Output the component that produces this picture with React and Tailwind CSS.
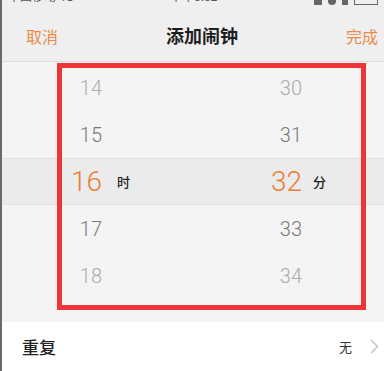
import React from 'react';

const cjk = { fontFamily: '"Noto Sans CJK SC", "Noto Sans", sans-serif' };

const rows = [
	{ h: '14', m: '30', tone: 'text-[#ababab]' },
	{ h: '15', m: '31', tone: 'text-[#7a7a7a]' },
	{ h: '16', m: '32', tone: 'text-[#ea7d3a]', active: true },
	{ h: '17', m: '33', tone: 'text-[#7a7a7a]' },
	{ h: '18', m: '34', tone: 'text-[#ababab]' },
];

const PickerRow = ({ row }) => (
	<div
		className={
			'flex items-center h-[47px] ' +
			(row.active ? 'bg-[#ebebeb] border-y border-[#e2e2e2]' : '')
		}
	>
		<div
			className={
				'w-[100px] text-right font-light leading-none ' +
				row.tone +
				(row.active ? ' text-[28px]' : ' text-[20px]')
			}
			style={{ fontFamily: 'Roboto, "Open Sans", sans-serif' }}
		>
			{row.h}
		</div>
		<div className="w-[100px] pl-[15px] text-[13px] font-medium text-[#222]" style={cjk}>
			{row.active ? '时' : ''}
		</div>
		<div
			className={
				'w-[100px] text-right font-light leading-none ' +
				row.tone +
				(row.active ? ' text-[28px]' : ' text-[20px]')
			}
			style={{ fontFamily: 'Roboto, "Open Sans", sans-serif' }}
		>
			{row.m}
		</div>
		<div className="pl-[11px] text-[13px] font-medium text-[#222]" style={cjk}>
			{row.active ? '分' : ''}
		</div>
	</div>
);

const App = () => {
	return (
		<div className="w-[384px] h-[371px] overflow-hidden bg-[#efefef] border-l-2 border-[#6a6a6a]">
			{/* status bar, mostly cut off */}
			<div className="h-[5px] overflow-hidden flex justify-between px-[6px] text-[12px] leading-[14px] text-[#555]">
				<span className="-mt-[11px]" style={cjk}>中国移动 4G</span>
				<span className="-mt-[11px]" style={cjk}>下午3:32</span>
				<span className="-mt-[11px] flex gap-[6px] items-end">
					<span className="w-[8px] h-[10px] bg-[#666]" />
					<span className="w-[8px] h-[10px] rounded-full bg-[#666]" />
					<span className="w-[6px] h-[10px] bg-[#666]" />
					<span className="w-[24px] h-[10px] border border-[#666]" />
				</span>
			</div>

			{/* header */}
			<div className="h-[57px] pt-[5px] flex items-center justify-between pl-[24px] pr-[6px] border-b border-[#dcdcdc]" style={cjk}>
				<span className="text-[16px] text-[#ec8a4c]">取消</span>
				<span className="text-[18px] font-bold text-[#1e1e1e]">添加闹钟</span>
				<span className="text-[16px] text-[#ec8a4c]">完成</span>
			</div>

			{/* picker */}
			<div className="relative h-[260px] bg-[#f4f4f4] pt-[2px]">
				{rows.map((row) => (
					<PickerRow key={row.h} row={row} />
				))}
				<div className="absolute left-[55px] top-[1px] w-[309px] h-[247px] border-[5px] border-[#ee3437]" />
			</div>

			{/* repeat row */}
			<div className="h-[49px] bg-white flex items-center justify-between pl-[20px] pr-[5px]" style={cjk}>
				<span className="text-[17px] font-medium text-[#222]">重复</span>
				<div className="flex items-center gap-[18px]">
					<span className="text-[13px] text-[#333]">无</span>
					<svg width="9" height="15" viewBox="0 0 9 15" fill="none">
						<path d="M1 1l6.5 6.5L1 14" stroke="#c4c4c4" strokeWidth="1.5" />
					</svg>
				</div>
			</div>
		</div>
	);
};

export default App;
